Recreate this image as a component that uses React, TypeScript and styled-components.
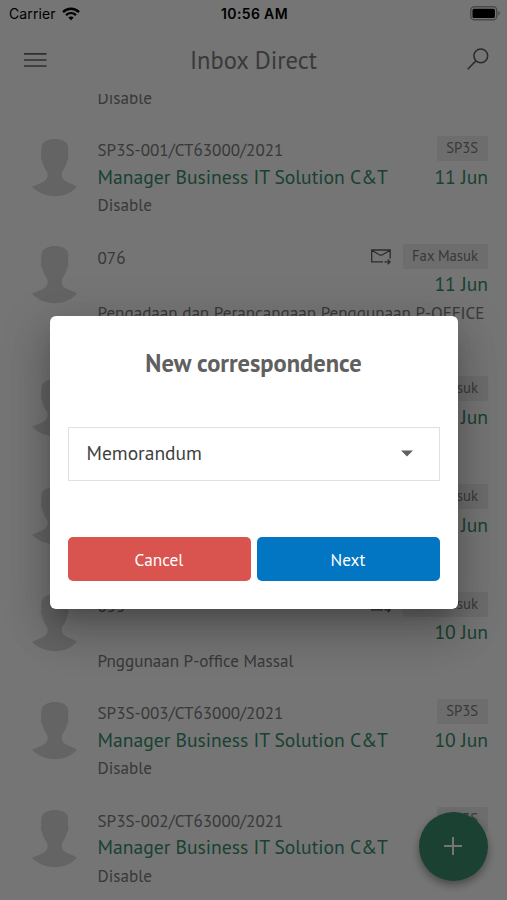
import React from 'react';
import styled, { createGlobalStyle } from 'styled-components';

const Global = createGlobalStyle`
  *, *::before, *::after { box-sizing: border-box; }
  body { margin: 0; background: #fff; font-family: "PT Sans", "Noto Sans", sans-serif; }
`;

const Screen = styled.div`
  position: relative;
  display: flex;
  flex-direction: column;
  width: 507px;
  height: 900px;
  overflow: hidden;
  background: #fff;
  color: #7c7c7c;
`;

const StatusBar = styled.div`
  flex: none;
  display: grid;
  grid-template-columns: 1fr auto 1fr;
  align-items: center;
  height: 27px;
  padding: 0 7px 0 9px;
  color: #000;
  font: 500 14px/27px Inter, sans-serif;
`;

const Carrier = styled.div`
  display: flex;
  align-items: center;
  gap: 6px;
  font-weight: 400;
  letter-spacing: 0.1px;
`;

const Clock = styled.div`
  font-weight: 600;
  letter-spacing: 0.35px;
`;

const BatterySlot = styled.div`
  display: flex;
  justify-content: flex-end;
`;

const Header = styled.header`
  flex: none;
  display: grid;
  grid-template-columns: 60px 1fr 60px;
  align-items: center;
  height: 67px;
  padding: 0 18px 2px 24px;
`;

const Title = styled.h1`
  margin: 0 0 0 -6px;
  text-align: center;
  font-size: 24.5px;
  font-weight: 400;
  line-height: 64px;
`;

const SearchSlot = styled.div`
  display: flex;
  justify-content: flex-end;
  padding-bottom: 2px;
`;

const List = styled.main`
  flex: 1;
  min-height: 0;
  overflow: hidden;
`;

const Scrolled = styled.div`
  margin-top: -65.6px;
`;

const Row = styled.article<{ $wrapped?: boolean }>`
  display: flex;
  height: ${(p) => (p.$wrapped ? 132.9 : 107.6)}px;
  padding: 0 19px 0 32px;
`;

const AvatarSlot = styled.div`
  flex: none;
  width: 65.5px;
  padding-top: 2.8px;
`;

const Body = styled.div`
  flex: 1;
  min-width: 0;
`;

const Line = styled.div`
  display: flex;
  justify-content: space-between;
  height: 27.6px;
  white-space: nowrap;
  font-size: 17.1px;
  line-height: 28px;
`;

const Sender = styled(Line)`
  color: #388f6d;
  font-size: 19.6px;
  line-height: 26.4px;
`;

const Marks = styled.div`
  display: flex;
  align-items: flex-start;
  gap: 12px;
`;

const Tag = styled.span`
  height: 25px;
  padding: 0 10px 0 9.5px;
  border-radius: 2px;
  background: #ededed;
  font-size: 14.7px;
  line-height: 24px;
`;

const MailSlot = styled.span`
  display: flex;
  padding-top: 5px;
`;

const Fab = styled.button`
  position: absolute;
  left: 418.5px;
  top: 811.5px;
  display: flex;
  align-items: center;
  justify-content: center;
  width: 69px;
  height: 69px;
  padding: 0;
  border: 0;
  border-radius: 50%;
  background: #398f6e;
  box-shadow: 0 4px 9px rgba(0, 0, 0, 0.38);
`;

const Overlay = styled.div`
  position: absolute;
  inset: 0;
  display: flex;
  align-items: center;
  justify-content: center;
  padding-top: 25px;
  background: rgba(0, 0, 0, 0.54);
`;

const Dialog = styled.section`
  display: flex;
  flex-direction: column;
  width: 408px;
  height: 293px;
  padding: 28px 18px;
  border-radius: 6px;
  background: #fff;
  box-shadow: 0 14px 20px -8px rgba(0, 0, 0, 0.2), 0 26px 42px 3px rgba(0, 0, 0, 0.14),
    0 10px 48px 8px rgba(0, 0, 0, 0.12);
`;

const DialogTitle = styled.h2`
  margin: 0 0 45px;
  color: #606060;
  text-align: center;
  font-size: 24.5px;
  font-weight: 700;
  line-height: 38px;
`;

const Select = styled.button`
  display: flex;
  align-items: center;
  justify-content: space-between;
  height: 54px;
  margin-bottom: 56px;
  padding: 0 26px 3px 18px;
  border: 1px solid #e0e0e0;
  background: #fff;
  color: #3f3f3f;
  font: inherit;
  font-size: 19.5px;
`;

const Actions = styled.div`
  display: grid;
  grid-template-columns: 1fr 1fr;
  gap: 6px;
`;

const Action = styled.button<{ $tone: 'danger' | 'primary' }>`
  height: 44px;
  padding: 0;
  border: 0;
  border-radius: 5px;
  background: ${(p) => (p.$tone === 'danger' ? '#d9534f' : '#0275c3')};
  color: #fff;
  font: inherit;
  font-size: 17.3px;
`;

const CaretSlot = styled.span`
  display: flex;
  padding-top: 1px;
`;

const Wifi = () => (
  <svg width="18" height="14" viewBox="0 0 18 14" fill="none" stroke="#000" strokeWidth="2.3">
    <path d="M1 5.1C5.5.6 12.5.6 17 5.1" />
    <path d="M4 8.1c2.9-2.7 7.1-2.7 10 0" />
    <path d="M9 13.3 6.3 10.5c1.5-1.3 3.9-1.3 5.4 0z" fill="#000" stroke="none" />
  </svg>
);

const Battery = () => (
  <svg width="30" height="15" viewBox="0 0 30 15">
    <rect x="0.8" y="0.8" width="26" height="13" rx="3.6" fill="none" stroke="#a0a0a0" strokeWidth="1.4" />
    <rect x="2.5" y="2.7" width="22.4" height="9.2" rx="1.5" fill="#000" />
    <path d="M28.3 5v4.6c2-.9 2-3.7 0-4.6z" fill="#a0a0a0" />
  </svg>
);

const MenuIcon = () => (
  <svg width="23" height="16" viewBox="0 0 23 16" stroke="#686868" strokeWidth="1.6">
    <path d="M0 1.9h22.5M0 8h22.5M0 14h22.5" />
  </svg>
);

const SearchIcon = () => (
  <svg width="22" height="22" viewBox="0 0 22 22" fill="none" stroke="#5c5c5c" strokeWidth="1.5">
    <circle cx="13.8" cy="7.8" r="6.9" />
    <path d="M8.9 12.9.7 21.2" />
  </svg>
);

const MailIcon = () => (
  <svg width="20" height="16" viewBox="0 0 20 16" fill="none" stroke="#606060" strokeWidth="1.3">
    <path d="M12 12.9H.7V1h18.5v8.5M.7 1.2l7.6 4.5q1.6.9 3.2 0l7.7-4.5M13.5 12.9h5.3M16.6 10.4l2.5 2.5-2.5 2.4" />
  </svg>
);

const Avatar = () => (
  <svg width="46" height="58" viewBox="0 0 46 58" fill="#d9d9d9">
    <path d="M22.5 0C28 0 33.5 1.5 35.5 5.5C37 9 35.8 12.5 36 16C36.8 17 36.8 20 35.2 22C34 27 32 30 29.9 33C29.6 36 30 38.5 31 40C34 44 40 44 45 47.8C39 54.5 31 57.2 22.5 57.2C14 57.2 6 54 0 47.8C6 45 12 43.5 14.5 40C15.6 38.5 16 36 15.4 33.5C13 30 11.5 27 10.3 22.5C8.6 20 8.5 17.5 9.3 16C9.4 12 8.6 8 10.5 5C13 1.5 18 0 22.5 0Z" />
  </svg>
);

const Plus = () => (
  <svg width="20" height="20" viewBox="0 0 20 20" stroke="#fff" strokeWidth="2">
    <path d="M10 1v18M1 10h18" />
  </svg>
);

const Caret = () => (
  <svg width="12" height="7" viewBox="0 0 12 7">
    <path d="M0 .5h12L6 6.5z" fill="#606060" />
  </svg>
);

interface Item {
  code?: string;
  tag?: string;
  date?: string;
  sender?: string;
  note?: string;
  mail?: boolean;
  wrapped?: boolean;
}

const manager = 'Manager Business IT Solution C&T';

const items: Item[] = [
  { note: 'Disable' },
  { code: 'SP3S-001/CT63000/2021', tag: 'SP3S', date: '11 Jun', sender: manager, note: 'Disable' },
  { code: '076', tag: 'Fax Masuk', date: '11 Jun', note: 'Pengadaan dan Perancangaan Penggunaan P-OFFICE', mail: true, wrapped: true },
  { tag: 'Fax Masuk', date: '11 Jun', mail: true },
  { tag: 'Fax Masuk', date: '10 Jun', mail: true },
  { code: '055', tag: 'Fax Masuk', date: '10 Jun', note: 'Pnggunaan P-office Massal', mail: true },
  { code: 'SP3S-003/CT63000/2021', tag: 'SP3S', date: '10 Jun', sender: manager, note: 'Disable' },
  { code: 'SP3S-002/CT63000/2021', tag: 'SP3S', sender: manager, note: 'Disable' },
];

export default function App() {
  return (
    <Screen>
      <Global />
      <StatusBar>
        <Carrier>
          Carrier <Wifi />
        </Carrier>
        <Clock>10:56 AM</Clock>
        <BatterySlot>
          <Battery />
        </BatterySlot>
      </StatusBar>
      <Header>
        <MenuIcon />
        <Title>Inbox Direct</Title>
        <SearchSlot>
          <SearchIcon />
        </SearchSlot>
      </Header>
      <List>
        <Scrolled>
          {items.map((item, i) => (
            <Row key={i} $wrapped={item.wrapped}>
              <AvatarSlot>
                <Avatar />
              </AvatarSlot>
              <Body>
                <Line>
                  <span>{item.code}</span>
                  <Marks>
                    {item.mail && (
                      <MailSlot>
                        <MailIcon />
                      </MailSlot>
                    )}
                    {item.tag && <Tag>{item.tag}</Tag>}
                  </Marks>
                </Line>
                <Sender>
                  <span>{item.sender}</span>
                  <span>{item.date}</span>
                </Sender>
                <Line>{item.note}</Line>
              </Body>
            </Row>
          ))}
        </Scrolled>
      </List>
      <Fab aria-label="New">
        <Plus />
      </Fab>
      <Overlay>
        <Dialog>
          <DialogTitle>New correspondence</DialogTitle>
          <Select>
            Memorandum
            <CaretSlot>
              <Caret />
            </CaretSlot>
          </Select>
          <Actions>
            <Action $tone="danger">Cancel</Action>
            <Action $tone="primary">Next</Action>
          </Actions>
        </Dialog>
      </Overlay>
    </Screen>
  );
}
